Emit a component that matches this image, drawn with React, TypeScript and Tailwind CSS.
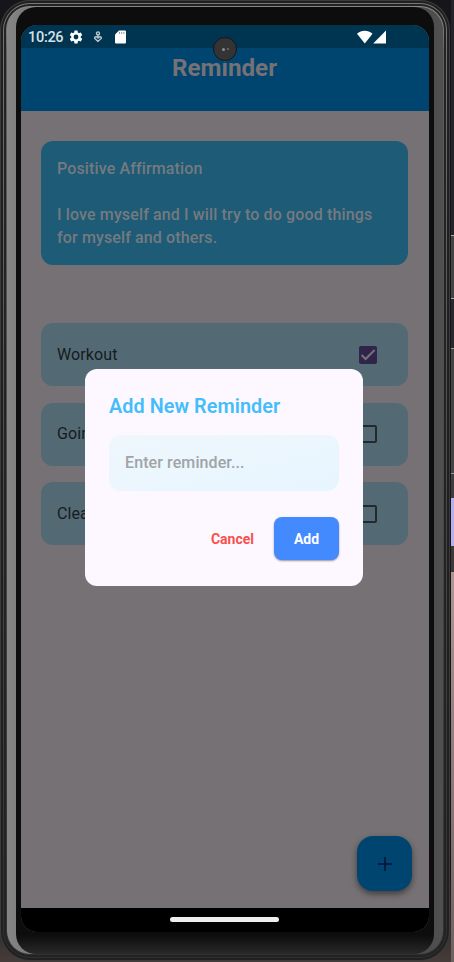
import React from "react";

function StatusBar() {
  return (
    <div className="flex h-[23px] items-center bg-[#003552] pl-[7px] text-white">
      <span className="w-[36px] pt-[3px] whitespace-nowrap text-[14.5px] leading-none font-medium tracking-[-0.3px] text-[#d7e0e5]">10:26</span>
      <svg className="ml-[4px] size-[16px]" viewBox="0 0 24 24" fill="currentColor">
        <path d="M19.14 12.94c.04-.3.06-.61.06-.94 0-.32-.02-.64-.07-.94l2.03-1.58a.49.49 0 0 0 .12-.61l-1.92-3.32a.488.488 0 0 0-.59-.22l-2.39.96c-.5-.38-1.03-.7-1.62-.94l-.36-2.54a.484.484 0 0 0-.48-.41h-3.84c-.24 0-.43.17-.47.41l-.36 2.54c-.59.24-1.13.57-1.62.94l-2.39-.96c-.22-.08-.47 0-.59.22L2.74 8.87c-.12.21-.08.47.12.61l2.03 1.58c-.05.3-.09.63-.09.94s.02.64.07.94l-2.03 1.58a.49.49 0 0 0-.12.61l1.92 3.32c.12.22.37.29.59.22l2.39-.96c.5.38 1.03.7 1.62.94l.36 2.54c.05.24.24.41.48.41h3.84c.24 0 .44-.17.47-.41l.36-2.54c.59-.24 1.13-.56 1.62-.94l2.39.96c.22.08.47 0 .59-.22l1.92-3.32c.12-.22.07-.47-.12-.61l-2.01-1.58zM12 15.6A3.6 3.6 0 1 1 12 8.4a3.6 3.6 0 0 1 0 7.2z" />
      </svg>
      <svg className="ml-[9px] h-[12px] w-[10px] text-[#b8c8d1]" viewBox="0 0 10 12" fill="none" stroke="currentColor" strokeWidth="1.4">
        <circle cx="5" cy="2.4" r="1.5" />
        <path d="M5 4v3M5 10.4L1.6 7.2C1.6 5.4 4 5.2 5 7c1-1.8 3.4-1.6 3.4.2z" />
      </svg>
      <svg className="ml-[12px] h-[14px] w-[11px]" viewBox="0 0 11 14">
        <path d="M4 .5h6a1 1 0 0 1 1 1v11a1 1 0 0 1-1 1H1a1 1 0 0 1-1-1V4.5z" fill="currentColor" />
        <path d="M4.5 2v2M6.7 2v2M8.9 2v2" stroke="#8b9ca6" strokeWidth="1" />
      </svg>
      <svg className="ml-[231px] h-[14px] w-[30px]" viewBox="0 0 30 14" fill="currentColor">
        <path d="M0 3.7C4.2-.2 11.3-.2 15.5 3.7L7.8 13.5z" />
        <path d="M29 .5v13H16.2z" />
      </svg>
    </div>
  );
}

function Reminder({ text, checked = false }: { text: string; checked?: boolean }) {
  return (
    <li className="flex h-[63px] items-center justify-between rounded-[12px] bg-[#536a74] pr-[30.6px] pl-4">
      <span className="text-[16px] tracking-[0.1px] text-[#151b1e]">{text}</span>
      {checked ? (
        <span className="flex size-[18px] items-center justify-center rounded-[2px] bg-[#2f2449]">
          <svg className="size-[18px]" viewBox="0 0 18 18" fill="none" stroke="#77727a" strokeWidth="2">
            <path d="M2.6 9l4 4 9-9" />
          </svg>
        </span>
      ) : (
        <span className="size-[18px] rounded-[2px] border-2 border-[#222a2e]" />
      )}
    </li>
  );
}

function Dialog() {
  return (
    <section className="absolute top-[344px] left-[64px] flex h-[217px] w-[278px] flex-col rounded-[12px] bg-[#fdf7ff] px-6 pt-[25px]">
      <h2 className="text-[19.8px] leading-[26px] font-semibold tracking-[0.07px] whitespace-nowrap text-[#45bdfb]">Add New Reminder</h2>
      <div className="mt-[15px] flex h-[56px] items-center rounded-[12px] bg-linear-to-br from-[#eff7fc] to-[#e7f5ff] px-4 text-[16px] font-medium tracking-[0.1px] text-[#a0a4a8]">
        Enter reminder...
      </div>
      <div className="mt-[26px] flex items-center justify-end gap-5 text-[14px] font-bold">
        <button className="pt-px text-[#f8514c]">Cancel</button>
        <button className="h-[43px] w-[65px] rounded-[8px] bg-[#448aff] pt-px text-white shadow-[0_1px_2px_#0006]">Add</button>
      </div>
    </section>
  );
}

function Screen() {
  return (
    <div className="relative flex h-[907px] w-[408px] flex-col overflow-hidden rounded-[16px] bg-[#757175]">
      <StatusBar />
      <header className="flex h-[63px] justify-center bg-[#00456f] pt-[5px]">
        <h1 className="pr-px text-[24.2px] leading-[30px] font-bold text-[#757175]">Reminder</h1>
      </header>
      <main className="flex flex-1 flex-col pt-[30px] pr-[21.5px] pl-5">
        <article className="h-[124px] rounded-[12px] bg-[#1e5b76] px-4 pt-4 text-[16px] leading-[23px] font-medium tracking-[0.13px] text-[#757a80]">
          <p>Positive Affirmation</p>
          <p className="mt-[23px] whitespace-nowrap">I love myself and I will try to do good things<br />for myself and others.</p>
        </article>
        <ul className="mt-[58px] flex flex-col gap-[16.5px]">
          <Reminder text="Workout" checked />
          <Reminder text="Going" />
          <Reminder text="Clean" />
        </ul>
        <button className="mt-auto mr-[-4.5px] mb-[17px] flex size-[55px] items-center justify-center self-end rounded-[16px] bg-[#00456f] shadow-[0_3px_6px_#0007]">
          <svg className="size-[14px]" viewBox="0 0 14 14" stroke="#071332" strokeWidth="1.6"><path d="M7 0v14M0 7h14" /></svg>
        </button>
      </main>
      <nav className="flex h-[24px] justify-center bg-black pt-[9px]">
        <span className="h-[5px] w-[109px] -translate-x-px rounded-full bg-[#eeeeee]" />
      </nav>
      <Dialog />
      <div className="absolute top-[12px] left-[192px] flex size-[24px] items-center justify-center gap-[2px] rounded-full border border-[#171717] bg-[#343434]">
        <span className="size-[3px] rounded-full bg-[#8d8a96]" />
        <span className="size-[2px] rounded-full bg-[#77706f]" />
      </div>
    </div>
  );
}

export default function App() {
  return (
    <div className="flex h-[962px] w-[454px] overflow-hidden bg-[#16151a] bg-linear-to-b from-[#16151a] from-90% to-[#463c3a] font-[Roboto,'Liberation_Sans',sans-serif]">
      <div className="h-[961px] w-[450px] shrink-0 rounded-[30px] bg-[#3c3c3c] p-px">
        <div className="h-full rounded-[29px] bg-[#202020] p-[2px]">
          <div className="h-full rounded-[27px] bg-linear-to-b from-[#777] via-[#4a4a4a] to-[#303030] p-px">
            <div className="h-full rounded-[26px] bg-[#232323] p-[2px]">
              <div className="h-full rounded-[24px] bg-linear-to-b from-[#888] from-1% via-[#606060] via-5% to-[#303030] p-px">
                <div className="h-full rounded-[23px] bg-linear-to-r from-[#858585] via-[#222] to-[#505050] px-[9px]">
                  <div className="flex h-full justify-center rounded-[20px] bg-linear-to-b from-[#0d0d0d] from-98% to-[#292929] pt-[18px]">
                    <Screen />
                  </div>
                </div>
              </div>
            </div>
          </div>
        </div>
      </div>
      <div className="flex w-[4px] flex-col pl-px">
        <div className="h-[235px] bg-[#25242a]" />
        <div className="h-[64px] border-y border-[#aaa] bg-[#444]" />
        <div className="h-[49px] bg-[#29282c]" />
        <div className="h-[126px] border-y border-[#999] bg-[#444]" />
        <div className="h-[24px] bg-[#403d41]" />
        <div className="h-[48px] bg-[#b5b0ed]" />
        <div className="h-[26px] bg-[#3d3939]" />
        <div className="flex-1 bg-linear-to-b from-[#ac9690] to-[#6f6160]" />
      </div>
    </div>
  );
}
